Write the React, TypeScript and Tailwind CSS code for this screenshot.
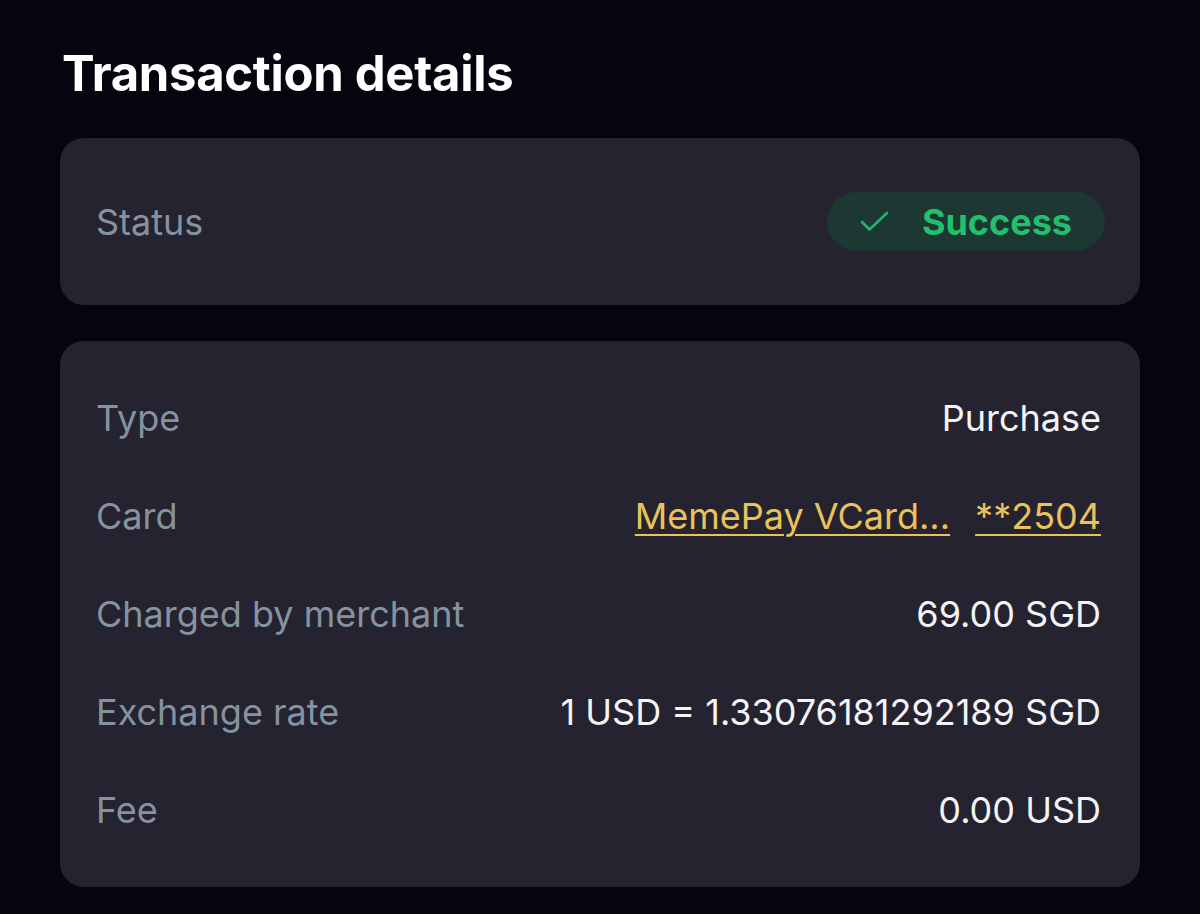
const rows: { label: string; value: React.ReactNode }[] = [
  { label: "Type", value: "Purchase" },
  {
    label: "Card",
    value: (
      <span className="flex items-center gap-[25px] text-[#e9c25c]">
        <span className="underline decoration-2 underline-offset-[5px]">MemePay VCard...</span>
        <span className="underline decoration-2 underline-offset-[5px]">**2504</span>
      </span>
    ),
  },
  { label: "Charged by merchant", value: "69.00 SGD" },
  { label: "Exchange rate", value: "1 USD = 1.33076181292189 SGD" },
  { label: "Fee", value: "0.00 USD" },
];

export default function App() {
  return (
    <div
      className="min-h-[914px] w-full bg-[#05050f] px-[60px] pt-[46px]"
      style={{ fontFamily: "Inter, 'Noto Sans', sans-serif" }}
    >
      <h1 className="pl-[2px] text-[49px] font-bold leading-[56px] tracking-[-0.006em] text-white">
        Transaction details
      </h1>

      <div className="mt-[36px] flex h-[167px] items-center justify-between rounded-[24px] bg-[#24232f] pl-[36px] pr-[35px]">
        <span className="text-[36px] text-[#8593a0]">Status</span>
        <span className="flex h-[59px] items-center gap-[33px] rounded-full bg-[#1d3733] px-[33px]">
          <svg width="29" height="21" viewBox="0 0 29 21" fill="none" aria-hidden="true">
            <path
              d="M2 11 9.5 18.5 27 2"
              stroke="#22b56b"
              strokeWidth="2.6"
              strokeLinecap="round"
              strokeLinejoin="round"
            />
          </svg>
          <span className="text-[36px] font-bold text-[#20c06e]">Success</span>
        </span>
      </div>

      <div className="mt-[36px] rounded-[24px] bg-[#24232f] py-[28px] pl-[36px] pr-[39px]">
        {rows.map((row) => (
          <div key={row.label} className="flex h-[98px] items-center justify-between text-[36px]">
            <span className="text-[#8593a0]">{row.label}</span>
            <span className="text-[#f4f4f6]">{row.value}</span>
          </div>
        ))}
      </div>
    </div>
  );
}
